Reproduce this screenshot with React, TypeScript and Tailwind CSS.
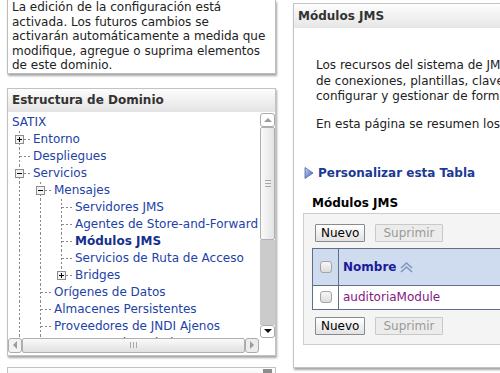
import React from 'react'

type Cell = 'line' | 'tee' | 'end'
type Node = { label: string; cells: Cell[]; toggle?: '+' | '-'; bold?: boolean }

const tree: Node[] = [
	{ label: 'SATIX', cells: [] },
	{ label: 'Entorno', cells: ['tee'], toggle: '+' },
	{ label: 'Despliegues', cells: ['tee'] },
	{ label: 'Servicios', cells: ['tee'], toggle: '-' },
	{ label: 'Mensajes', cells: ['line', 'tee'], toggle: '-' },
	{ label: 'Servidores JMS', cells: ['line', 'line', 'tee'] },
	{ label: 'Agentes de Store-and-Forward', cells: ['line', 'line', 'tee'] },
	{ label: 'Módulos JMS', cells: ['line', 'line', 'tee'], bold: true },
	{ label: 'Servicios de Ruta de Acceso', cells: ['line', 'line', 'tee'] },
	{ label: 'Bridges', cells: ['line', 'line', 'end'], toggle: '+' },
	{ label: 'Orígenes de Datos', cells: ['line', 'tee'] },
	{ label: 'Almacenes Persistentes', cells: ['line', 'tee'] },
	{ label: 'Proveedores de JNDI Ajenos', cells: ['line', 'tee'] },
	{ label: 'Contextos de Trabajo', cells: ['line', 'tee'] },
]

function TreeCell({ kind, toggle }: { kind: Cell; toggle?: '+' | '-' }) {
	return (
		<svg width="21" height="17" className="shrink-0" viewBox="0 0 21 17">
			<line x1="7.5" y1="0" x2="7.5" y2={kind === 'end' ? 8.5 : 17} stroke="#8a8a8a" strokeDasharray="2 2" />
			{kind !== 'line' && <line x1="8" y1="8.5" x2="20" y2="8.5" stroke="#8a8a8a" strokeDasharray="2 2" />}
			{toggle && (
				<g>
					<rect x="3.5" y="4.5" width="8" height="8" fill="#f2f2f2" stroke="#8c8c8c" />
					<line x1="5" y1="8.5" x2="10" y2="8.5" stroke="#000" />
					{toggle === '+' && <line x1="7.5" y1="6" x2="7.5" y2="11" stroke="#000" />}
				</g>
			)}
		</svg>
	)
}

function Tri({ dir, color }: { dir: 'up' | 'down' | 'left' | 'right'; color: string }) {
	const pts = {
		up: '0,5 4,1 8,5',
		down: '0,1 8,1 4,5',
		left: '5,0 5,8 1,4',
		right: '1,0 1,8 5,4',
	}[dir]
	const w = dir === 'up' || dir === 'down' ? 8 : 6
	const h = dir === 'up' || dir === 'down' ? 6 : 8
	return (
		<svg width={w} height={h} viewBox={`0 0 ${w} ${h}`}>
			<polygon points={pts} fill={color} />
		</svg>
	)
}

function Btn({ label, disabled }: { label: string; disabled?: boolean }) {
	return (
		<div
			className={
				disabled
					? 'h-[18px] px-[7px] flex items-center border border-[#c9c9c9] bg-[#ececec] text-[#9a9a9a] rounded-[1px]'
					: 'h-[18px] px-[5px] flex items-center border border-[#8a8a8a] bg-[linear-gradient(#ffffff,#e2e2e2)] text-black rounded-[1px]'
			}
		>
			{label}
		</div>
	)
}

function Check() {
	return <div className="w-[12px] h-[12px] rounded-[3px] border border-[#a4a4a4] bg-[linear-gradient(#f7f7f7,#dcdcdc)]" />
}

export default function App() {
	return (
		<div className="w-[500px] h-[373px] overflow-hidden bg-white flex font-['DejaVu_Sans',sans-serif] text-[12px] text-[#222]">
			{/* left column */}
			<div className="w-[293px] shrink-0 pl-[7px]">
				<div className="w-[269px] pb-0 px-[4px] border border-t-0 border-[#bcbcbc] shadow-[1px_2px_2px_rgba(0,0,0,0.35)] leading-[14.5px] whitespace-nowrap">
					La edición de la configuración está
					<br />
					activada. Los futuros cambios se
					<br />
					activarán automáticamente a medida que
					<br />
					modifique, agregue o suprima elementos
					<br />
					de este dominio.
				</div>

				<div className="w-[269px] mt-[14px] pb-[2px] border border-[#c2c2c2] shadow-[1px_2px_2px_rgba(0,0,0,0.35)]">
					<div className="h-[23px] px-[4px] flex items-center font-bold text-[#333] bg-[linear-gradient(#fdfdfd,#e3e3e3)]">
						Estructura de Dominio
					</div>
					<div className="flex h-[226px]">
						<div className="flex-1 overflow-hidden pl-[4px] pt-[2px]">
							{tree.map((n) => (
								<div key={n.label} className="flex h-[17px] items-center whitespace-nowrap leading-[17px]">
									{n.cells.map((c, i) => (
										<TreeCell key={i} kind={c} toggle={i === n.cells.length - 1 ? n.toggle : undefined} />
									))}
									<span className={n.bold ? 'font-bold text-[#14308c]' : 'text-[#2342a6]'}>{n.label}</span>
								</div>
							))}
						</div>
						<div className="w-[15px] mt-[1px] flex flex-col">
							<div className="h-[14px] border border-[#ababab] rounded-[3px] bg-white flex items-center justify-center">
								<Tri dir="up" color="#9c9c9c" />
							</div>
							<div className="h-[113px] border border-[#b0b0b0] rounded-[2px] bg-[linear-gradient(to_right,#fafafa,#e3e3e3)] flex flex-col items-center justify-center gap-[2px]">
								<div className="w-[6px] h-px bg-[#a8a8a8]" />
								<div className="w-[6px] h-px bg-[#a8a8a8]" />
								<div className="w-[6px] h-px bg-[#a8a8a8]" />
							</div>
							<div className="flex-1 bg-[#cbcbcb]" />
							<div className="h-[13px] border border-[#ababab] rounded-[3px] bg-white flex items-center justify-center">
								<Tri dir="down" color="#111" />
							</div>
						</div>
					</div>
					<div className="flex h-[15px]">
						<div className="w-[14px] border border-[#ababab] rounded-[3px] bg-[#f3f3f3] flex items-center justify-center">
							<Tri dir="left" color="#9c9c9c" />
						</div>
						<div className="flex-1 border border-[#b0b0b0] rounded-[2px] bg-[linear-gradient(#fafafa,#e0e0e0)] flex items-center justify-center gap-[2px]">
							<div className="w-px h-[6px] bg-[#a8a8a8]" />
							<div className="w-px h-[6px] bg-[#a8a8a8]" />
							<div className="w-px h-[6px] bg-[#a8a8a8]" />
						</div>
						<div className="w-[14px] border border-[#ababab] rounded-[3px] bg-[#ececec] flex items-center justify-center">
							<Tri dir="right" color="#9c9c9c" />
						</div>
						<div className="w-[16px] bg-white" />
					</div>
				</div>

				<div className="w-[269px] mt-[11px] h-[30px] border border-[#c2c2c2] bg-[linear-gradient(#fdfdfd,#e3e3e3)] flex justify-end pr-[3px] pt-[1px]">
					<div className="w-[9px] h-[9px] bg-[#8d8d8d]" />
				</div>
			</div>

			{/* right column */}
			<div className="w-[260px] h-[365px] shrink-0 mt-[3px] border border-[#c4c4c4] shadow-[1px_2px_2px_rgba(0,0,0,0.35)]">
				<div className="h-[24px] px-[4px] flex items-center font-bold text-[#333] bg-[linear-gradient(#fdfdfd,#e6e6e6)] whitespace-nowrap">
					Módulos JMS
				</div>
				<div className="pl-[4px] pt-[30px] whitespace-nowrap">
					<div className="ml-[18px]">
						<p className="leading-[15.5px]">
							Los recursos del sistema de JMS se configuran y se almacenan como módulos similares
							<br />
							de conexiones, plantillas, claves de destino, cuotas y parámetros de transporte.
							<br />
							configurar y gestionar de forma centralizada.
						</p>
						<p className="mt-[12.5px] leading-[15.5px]">En esta página se resumen los módulos de sistema JMS.</p>
					</div>

					<div className="mt-[32px] ml-[6px] flex items-center gap-[4px] leading-[16px]">
						<svg width="10" height="12" viewBox="0 0 10 12">
							<defs>
								<linearGradient id="ar" x1="0" y1="0" x2="1" y2="1">
									<stop offset="0" stopColor="#c9d6f2" />
									<stop offset="1" stopColor="#3f5fb0" />
								</linearGradient>
							</defs>
							<polygon points="1,0.5 9,6 1,11.5" fill="url(#ar)" stroke="#4a63a8" strokeWidth="0.8" />
						</svg>
						<span className="font-bold text-[#1c3a94]">Personalizar esta Tabla</span>
					</div>

					<div className="mt-[14px] ml-[14px] font-bold text-black leading-[16px]">Módulos JMS</div>

					<div className="mt-[2px] ml-[5px] border border-[#cdcdcd] bg-[#f4f4f4] pl-[8px] pt-[10px] pb-[9px]">
						<div className="ml-[3px] flex gap-[10px]">
							<Btn label="Nuevo" />
							<Btn label="Suprimir" disabled />
						</div>
						<div className="mt-[6px] border border-[#5d6f8d] border-r-0">
							<div className="flex h-[37px] bg-[#cfdbee] border-b border-[#5d6f8d]">
								<div className="w-[26px] border-r border-[#5d6f8d] flex items-center justify-center">
									<Check />
								</div>
								<div className="flex items-center pl-[4px] gap-[3px]">
									<span className="font-bold text-[#1a1a9c]">Nombre</span>
									<svg width="15" height="12" viewBox="0 0 15 12">
										<polyline points="2,7 7.5,2 13,7" fill="none" stroke="#8297c0" strokeWidth="1.6" />
										<polyline points="2,11 7.5,6 13,11" fill="none" stroke="#8297c0" strokeWidth="1.6" />
									</svg>
								</div>
							</div>
							<div className="flex h-[23px] bg-white">
								<div className="w-[26px] border-r border-[#5d6f8d] flex items-center justify-center">
									<Check />
								</div>
								<div className="flex items-center pl-[4px] text-[#86177f]">auditoriaModule</div>
							</div>
						</div>
						<div className="mt-[7px] ml-[3px] flex gap-[10px]">
							<Btn label="Nuevo" />
							<Btn label="Suprimir" disabled />
						</div>
					</div>
				</div>
			</div>
		</div>
	)
}
